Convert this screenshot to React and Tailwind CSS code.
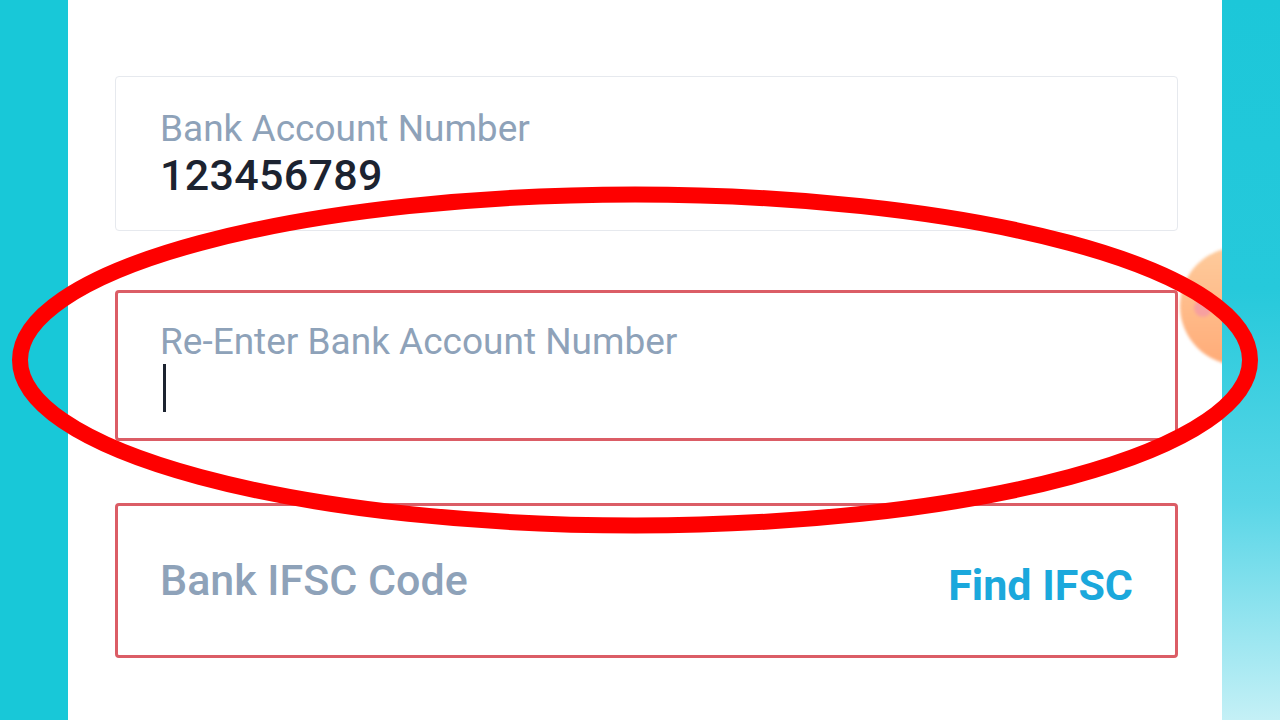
const fontStack = { fontFamily: 'Roboto, "Noto Sans", sans-serif' };

const App = () => {
  return (
    <div className="w-[1280px] h-[720px] flex overflow-hidden relative bg-white" style={fontStack}>
      <div className="w-[68px] h-full bg-[#18c8d8]" />

      <div className="flex-1 h-full relative overflow-hidden bg-white">
        {/* floating help bubble peeking in from the edge */}
        <div className="absolute left-[1112px] top-[247px] w-[118px] h-[118px] rounded-full bg-[linear-gradient(180deg,#fdcb9c_0%,#ffb886_60%,#ffab78_100%)] blur-[1.5px]">
          <div className="absolute left-[14px] top-[52px] w-[18px] h-[18px] rounded-full bg-[#f7a0a0]" />
        </div>

        <div className="relative pl-[47px] pr-[44px] pt-[76px] flex flex-col">
          <div className="h-[155px] rounded-[4px] border border-[#e6e9ee] bg-white pl-[44px] pt-[30px]">
            <div className="text-[37px] leading-[44px] text-[#8ea2b9]">Bank Account Number</div>
            <div className="-mt-[2px] text-[43px] leading-[52px] font-medium text-[#1c2330] tracking-[0.3px]">123456789</div>
          </div>

          <div className="h-[151px] mt-[59px] rounded-[4px] border-[3px] border-[#db5d66] bg-white pl-[42px] pt-[27px]">
            <div className="text-[37px] leading-[44px] text-[#8ea2b9]">Re-Enter Bank Account Number</div>
            <div className="pl-[3px]">
              <div className="w-[3px] h-[48px] bg-[#1c2330]" />
            </div>
          </div>

          <div className="h-[155px] mt-[62px] rounded-[4px] border-[3px] border-[#db5d66] bg-white pl-[42px] pr-[42px] flex items-center justify-between">
            <span className="text-[43px] font-medium text-[#8ea2b9]">Bank IFSC Code</span>
            <span className="text-[43px] font-bold text-[#1ba8dc] mt-[10px]">Find IFSC</span>
          </div>
        </div>
      </div>

      <div className="w-[58px] h-full bg-[linear-gradient(180deg,#1cc7d9_0%,#26c9db_40%,#5ad6e7_70%,#c4f0f6_100%)]" />

      {/* hand-drawn highlight ring */}
      <svg className="absolute inset-0 pointer-events-none" width="1280" height="720" viewBox="0 0 1280 720">
        <ellipse cx="635" cy="360" rx="615" ry="165.5" fill="none" stroke="#fe0000" strokeWidth="16" />
      </svg>
    </div>
  );
};

export default App;
